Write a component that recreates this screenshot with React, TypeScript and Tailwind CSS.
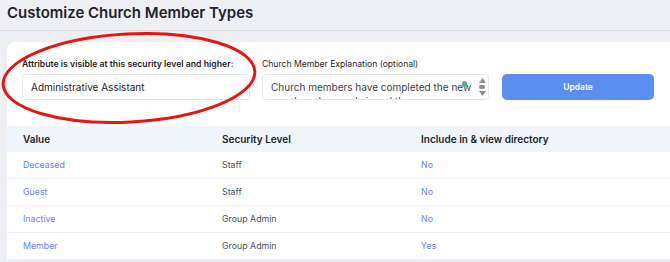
import React from "react";

const rows = [
  { v: "Deceased", s: "Staff", d: "No" },
  { v: "Guest", s: "Staff", d: "No" },
  { v: "Inactive", s: "Group Admin", d: "No" },
  { v: "Member", s: "Group Admin", d: "Yes" },
];

export default function App() {
  return (
    <div
      className="relative w-[670px] h-[262px] overflow-hidden bg-[#eeeff2]"
      style={{ fontFamily: "Inter, 'Noto Sans', sans-serif" }}
    >
      <div className="pl-[7px] pt-[2px] h-[31px] border-b border-[#dcdee2]">
        <h1 className="text-[15px] leading-[22px] font-semibold text-[#1f2329]">
          Customize Church Member Types
        </h1>
      </div>
      <div className="ml-[7px] mt-[11px] bg-white rounded-tl-[8px]">
        <div className="flex items-end pl-[15px] pt-[15px] pb-[26px]">
          <div className="flex flex-col w-[228px]">
            <label className="text-[8.7px] leading-[14px] font-semibold text-[#1f2329] mb-[3px] whitespace-nowrap">
              Attribute is visible at this security level and higher:
            </label>
            <div className="h-[26px] border border-[#e4e6ea] rounded-[4px] flex items-center pl-[8px] text-[10px] text-[#1f2329]">
              Administrative Assistant
            </div>
          </div>
          <div className="flex flex-col w-[227px] ml-[12px]">
            <label className="text-[8.6px] leading-[14px] text-[#1f2329] mb-[3px] whitespace-nowrap">
              Church Member Explanation (optional)
            </label>
            <div className="relative h-[26px] border border-[#e4e6ea] rounded-[4px] overflow-hidden flex">
              <div className="flex-1 pl-[8px] pt-[5px] text-[10px] leading-[14px] text-[#3a3f46] overflow-hidden">
                <div className="whitespace-nowrap">Church members have completed the new</div>
                <div className="whitespace-nowrap">member class and signed the</div>
              </div>
              <div className="w-[12px] flex flex-col items-center justify-between py-[3px] bg-white">
                <svg width="7" height="5" viewBox="0 0 7 5"><path d="M0 5 L3.5 0 L7 5Z" fill="#8a8d92" /></svg>
                <div className="w-[6px] h-[4px] rounded-full bg-[#8a8d92]" />
                <svg width="7" height="5" viewBox="0 0 7 5"><path d="M0 0 L3.5 5 L7 0Z" fill="#8a8d92" /></svg>
              </div>
              <div className="absolute left-[199px] top-[6px] w-[5px] h-[6px] rounded-full bg-[#5aa897]" />
            </div>
          </div>
          <button className="w-[152px] h-[26px] ml-[13px] rounded-[5px] bg-[#5b8def] text-white text-[8.5px] font-semibold">
            Update
          </button>
        </div>
        <div className="bg-[#f0f5fc] h-[26px] flex items-center text-[10px] font-semibold text-[#1f2329]">
          <div className="w-[215px] pl-[16px]">Value</div>
          <div className="w-[199px]">Security Level</div>
          <div>Include in &amp; view directory</div>
        </div>
        {rows.map((r) => (
          <div key={r.v} className="h-[27px] flex items-center text-[8.8px] border-b border-[#f0f1f3]">
            <div className="w-[215px] pl-[16px] text-[#6282ee]">{r.v}</div>
            <div className="w-[199px] text-[#4a4f56]">{r.s}</div>
            <div className="text-[#6282ee]">{r.d}</div>
          </div>
        ))}
      </div>
      <svg className="absolute left-0 top-0 pointer-events-none" width="670" height="262">
        <ellipse cx="129" cy="78" rx="126" ry="44" fill="none" stroke="#e8140f" strokeWidth="3" transform="rotate(-3 129 78)" />
      </svg>
    </div>
  );
}
